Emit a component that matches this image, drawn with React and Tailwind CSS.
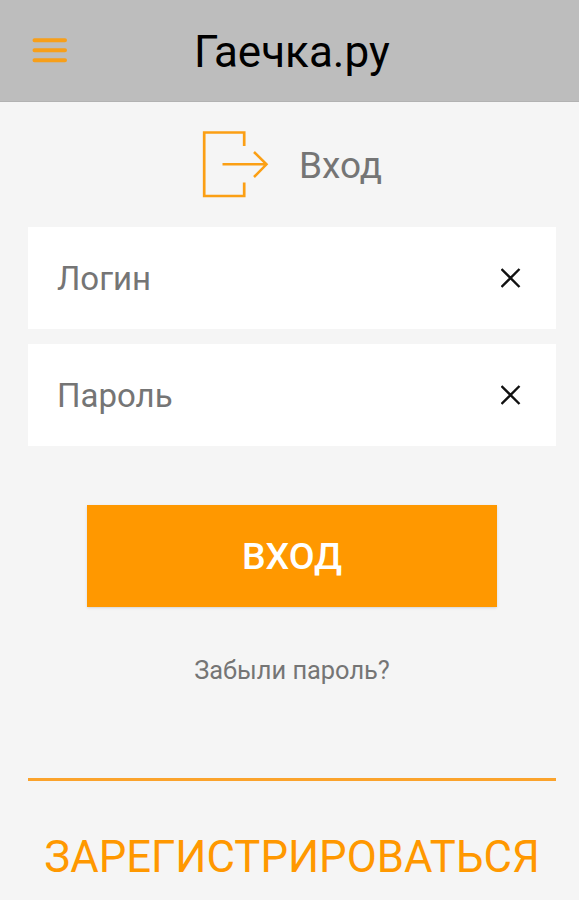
import React, { useState } from 'react';

function MenuIcon() {
  return (
    <svg className="block" width="36" height="26" viewBox="0 0 36 26" fill="none" stroke="#f79f1a" strokeWidth="4" strokeLinecap="round">
      <path d="M2.5 2.3H33M2.5 12.3H33M2.5 22.2H33" />
    </svg>
  );
}

function LoginIcon() {
  return (
    <svg className="block" width="68" height="68" viewBox="0 0 68 68" fill="none" stroke="#fb9f14" strokeWidth="2.7">
      <path d="M42.2 15V1.5H2.2V65H42.2V51.5" />
      <path d="M20.5 33.3H65M52 21L64.5 33.3L52 46" strokeWidth="2.5" />
    </svg>
  );
}

function ClearIcon() {
  return (
    <svg className="block" width="20" height="20" viewBox="0 0 20 20" fill="none" stroke="#111111" strokeWidth="2.4">
      <path d="M0.5 1L18.5 19M18.5 1L0.5 19" />
    </svg>
  );
}

function Field({ type, placeholder }) {
  const [value, setValue] = useState('');

  return (
    <div className="flex h-[102px] items-center bg-white pl-[29px] pr-[35px]">
      <input
        className="min-w-0 flex-1 bg-transparent pt-[2px] text-[33px] text-[#757575] outline-none placeholder:text-[#757575]"
        type={type}
        placeholder={placeholder}
        value={value}
        onChange={(e) => setValue(e.target.value)}
      />
      <button type="button" aria-label="Очистить" onClick={() => setValue('')}>
        <ClearIcon />
      </button>
    </div>
  );
}

export default function App() {
  return (
    <div className="flex h-screen flex-col overflow-hidden bg-[#f5f5f5] font-[Roboto,sans-serif]">
      {/* Header */}
      <header className="flex h-[102px] shrink-0 items-center border-b border-[#b2b2b2] bg-[#bdbdbd] pl-8">
        <button type="button" aria-label="Меню">
          <MenuIcon />
        </button>
        <h1 className="ml-[126px] pt-[2px] text-[44px] leading-none text-black">Гаечка.ру</h1>
      </header>

      <main className="flex flex-col pl-7 pr-[23px]">
        {/* Title */}
        <div className="flex h-[125px] items-center pl-[174px]">
          <LoginIcon />
          <h2 className="ml-[29px] pt-[2px] text-[37px] leading-none text-[#757575]">Вход</h2>
        </div>

        <form className="flex flex-col" onSubmit={(e) => e.preventDefault()}>
          <div className="flex flex-col gap-[15px]">
            <Field type="text" placeholder="Логин" />
            <Field type="password" placeholder="Пароль" />
          </div>
          <button type="submit" className="mx-[59px] mt-[59px] h-[102px] bg-[#ff9800] text-[37.5px] font-medium text-white shadow">
            ВХОД
          </button>
        </form>

        <a className="mt-[49px] text-center text-[25.4px] leading-[28px] text-[#757575]" href="#">Забыли пароль?</a>

        {/* Registration */}
        <div className="mt-[94px] border-t-3 border-[#fba32c] pt-[52px] text-center">
          <a className="whitespace-nowrap text-[43.7px] leading-[48px] text-[#ff9800]" href="#">ЗАРЕГИСТРИРОВАТЬСЯ</a>
        </div>
      </main>
    </div>
  );
}
